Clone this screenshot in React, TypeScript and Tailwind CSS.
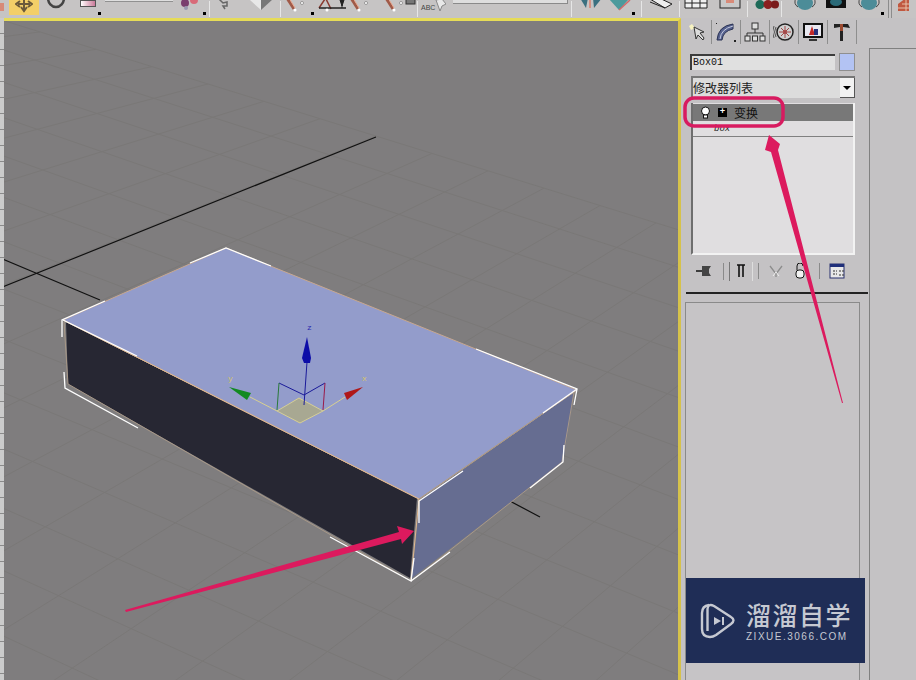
const edgeY = (x: number) => 128 + 0.31 * (x - 350);

// far-to-near lines, steeper as they go right
const gridA = Array.from({ length: 20 }, (_, i) => {
  const x = 40 + i * 56;
  const slope = -0.4 - 0.0008 * (x - 376);
  return { x, y: edgeY(x), x2: x - 900, y2: edgeY(x) - slope * 900 };
});

// lines running with the far edge, spreading out towards the viewer
const gridB = Array.from({ length: 18 }, (_, i) => {
  const slope = 0.31 + 0.012 * i;
  const y = 128 + 32 * i + 1.5 * i * i;
  return { y1: y - slope * 350, y2: y + slope * 350 };
});

function Bar() {
  return <div className="h-[16px] w-[1px] bg-[#8c8c8c] border-r border-[#e6e6e6]" />;
}

function Corner() {
  return <div className="absolute bottom-0 right-0 h-[3px] w-[3px] bg-black" />;
}

function Pencil({ extra }: { extra?: boolean }) {
  return (
    <svg width="20" height="12" viewBox="0 0 20 12" className="shrink-0">
      <path d="M1 -2 L8 9" stroke="#a05a48" strokeWidth="3" />
      <path d="M3 -2 L9 8" stroke="#e8a890" strokeWidth="1" />
      <circle cx="9" cy="10" r="1.5" fill="#fff" />
      <circle cx="16" cy="3" r="1.5" fill="#fff" stroke="#555" strokeWidth="0.5" />
      {extra && <rect x="12" y="0" width="7" height="4" fill="#333" />}
    </svg>
  );
}

function Toolbar() {
  return (
    <div className="relative flex h-[18px] shrink-0 items-start overflow-hidden bg-[#c6c4c4]">
      <div className="mt-[3px] h-[8px] w-[4px] shrink-0 bg-[#d88a78]" />
      <div className="ml-[5px] flex h-[15px] w-[30px] shrink-0 items-center justify-center bg-[#f3cf68]">
        <svg width="18" height="15" viewBox="0 0 18 15">
          <path d="M9 -2 L9 9 M3 4 L15 4 M5 1 L1 4 L5 7 M13 1 L17 4 L13 7 M6 7 L9 11 L12 7" stroke="#6b5a3a" strokeWidth="2" fill="none" />
        </svg>
      </div>
      <svg width="20" height="10" viewBox="0 0 20 10" className="ml-[7px] shrink-0">
        <path d="M2 -2 A8 9 0 0 0 18 -2" stroke="#444" strokeWidth="2.5" fill="none" />
      </svg>
      <div className="relative ml-[9px] h-[15px] w-[26px] shrink-0">
        <div className="ml-[5px] h-[7px] w-[16px] border border-[#555] bg-gradient-to-r from-[#fff] to-[#c87a9a]" />
        <Corner />
      </div>
      <div className="ml-[4px] flex h-[2px] w-[68px] shrink-0 border-b border-[#909090] bg-[#dedede]" />
      <div className="relative ml-[8px] h-[15px] w-[25px] shrink-0">
        <svg width="18" height="10" viewBox="0 0 18 10">
          <circle cx="4" cy="3" r="4" fill="#7a3f6e" />
          <circle cx="13" cy="0" r="4" fill="#d86a78" />
          <circle cx="5" cy="8" r="2" fill="#9a9ab0" />
        </svg>
        <Corner />
      </div>
      <div className="ml-[3px] mt-[1px]"><Bar /></div>
      <svg width="14" height="10" viewBox="0 0 14 10" className="ml-[7px] shrink-0">
        <path d="M2 -1 L6 3 L10 2 L10 6 L6 6 L8 9" stroke="#666" strokeWidth="1.5" fill="none" />
      </svg>
      <svg width="32" height="14" viewBox="0 0 32 14" className="ml-[15px] shrink-0">
        <path d="M4 0 L15 10 L15 0 Z" fill="#e8e8e8" />
        <path d="M15 10 L27 -1 L15 -1 Z" fill="#777" />
      </svg>
      <div className="ml-[2px] mt-[1px]"><Bar /></div>
      <div className="relative ml-[5px] h-[15px] w-[28px] shrink-0">
        <Pencil />
        <Corner />
      </div>
      <svg width="30" height="12" viewBox="0 0 30 12" className="ml-[4px] shrink-0">
        <path d="M1 8 L7 -1 M8 -1 L13 9" stroke="#8a3a30" strokeWidth="1.5" />
        <path d="M1 8 L28 8" stroke="#222" strokeWidth="1.5" />
        <path d="M22 0 L26 0 L24 6 Z M24 -2 L24 8" fill="#222" stroke="#222" />
        <circle cx="9" cy="10" r="1.5" fill="#fff" />
      </svg>
      <div className="ml-[2px]"><Pencil /></div>
      <div className="ml-[15px]"><Pencil /></div>
      <svg width="12" height="10" viewBox="0 0 12 10" className="shrink-0">
        <rect x="1" y="-3" width="9" height="7" fill="#777" stroke="#333" />
      </svg>
      <div className="mt-[1px]"><Bar /></div>
      <div className="relative ml-[3px] h-[15px] w-[30px] shrink-0 pt-[3px] font-['Liberation_Sans',sans-serif] text-[7px] leading-[10px] text-[#444]">
        ABC
        <svg width="12" height="12" viewBox="0 0 12 12" className="absolute right-[5px] top-0">
          <path d="M2 0 L6 11 L8 6 L12 4 L8 -1 Z" fill="#e8e8e8" stroke="#888" />
        </svg>
      </div>
      <div className="ml-[2px] h-[4px] w-[115px] shrink-0 border-r border-b border-[#8a8a8a] bg-[#dedede]" />
      <div className="ml-[3px] mt-[1px]"><Bar /></div>
      <svg width="26" height="10" viewBox="0 0 26 10" className="ml-[6px] shrink-0">
        <path d="M2 -2 L8 8 L10 -2 Z" fill="#3a7080" />
        <path d="M12 -2 L12 8" stroke="#d88070" strokeWidth="1.5" />
        <path d="M15 -2 L16 8 L24 -2 Z" fill="#3a7080" />
      </svg>
      <div className="relative ml-[4px] h-[15px] w-[27px] shrink-0">
        <svg width="24" height="11" viewBox="0 0 24 11">
          <path d="M1 -1 L11 10 L21 -1 Z" fill="#4c9a9c" />
          <path d="M11 10 L22 0" stroke="#d06a6a" strokeWidth="1.5" />
        </svg>
        <Corner />
      </div>
      <div className="ml-[6px] mt-[1px]"><Bar /></div>
      <svg width="24" height="9" viewBox="0 0 24 9" className="ml-[7px] shrink-0">
        <path d="M1 -1 L16 8 L23 4 L8 -3 Z" fill="#eee" stroke="#222" />
        <path d="M1 2 L16 8" stroke="#222" />
      </svg>
      <div className="ml-[6px] mt-[1px]"><Bar /></div>
      <svg width="24" height="10" viewBox="0 0 24 10" className="ml-[4px] shrink-0">
        <path d="M1 -1 H23 V8 H1 Z M1 3 H23 M8 -1 V8 M16 -1 V8" fill="#f0f0f0" stroke="#222" />
      </svg>
      <svg width="24" height="10" viewBox="0 0 24 10" className="ml-[10px] shrink-0">
        <rect x="2" y="-2" width="20" height="10" fill="#c8c8c8" stroke="#222" />
        <rect x="8" y="-1" width="8" height="4" fill="#d88a78" />
      </svg>
      <div className="ml-[5px] mt-[1px]"><Bar /></div>
      <svg width="24" height="10" viewBox="0 0 24 10" className="ml-[7px] shrink-0">
        <circle cx="5" cy="4.5" r="4.5" fill="#1e6a58" />
        <circle cx="13" cy="4.5" r="4.5" fill="#8a2020" />
        <circle cx="20" cy="4.5" r="4" fill="#7a1a1a" />
      </svg>
      <div className="ml-[2px] mt-[1px]"><Bar /></div>
      <svg width="24" height="11" viewBox="0 0 24 11" className="ml-[11px] shrink-0">
        <ellipse cx="12" cy="3" rx="8" ry="7" fill="#4c8c98" />
        <path d="M3 -2 Q0 4 5 7 M21 -2 Q24 4 19 7" stroke="#444" fill="none" />
      </svg>
      <svg width="20" height="9" viewBox="0 0 20 9" className="ml-[9px] shrink-0">
        <rect x="0" y="-1" width="20" height="9" fill="#111" />
        <ellipse cx="10" cy="2" rx="6" ry="4" fill="#2a6a78" />
      </svg>
      <div className="relative ml-[11px] h-[15px] w-[27px] shrink-0">
        <svg width="24" height="11" viewBox="0 0 24 11">
          <ellipse cx="12" cy="3" rx="8" ry="7" fill="#4c8c98" />
          <path d="M3 -2 Q0 4 5 7 M21 -2 Q24 4 19 7" stroke="#444" fill="none" />
        </svg>
        <Corner />
      </div>
      <div className="ml-[4px] h-[18px] w-[4px] shrink-0 border-x border-[#8c8c8c]" />
      <svg width="11" height="11" viewBox="0 0 11 11" className="ml-[6px] shrink-0">
        <path d="M0 11 L0 4 L8 -2 L15 -2 L15 11 Z" fill="#c05840" />
        <path d="M4 4 H15 M0 8 H15 M8 0 V11" stroke="#e8c0a8" />
      </svg>
    </div>
  );
}

function Viewport() {
  return (
    <div className="min-w-0 flex-1 border-t-[3px] border-r-[3px] border-t-[#e6dc58] border-r-[#d6c24a] bg-[#7f7d7e]">
      <svg width="674" height="659" viewBox="4 21 674 659" className="block">
        {gridA.map((l) => (
          <line key={l.x} x1={l.x} y1={l.y} x2={l.x2} y2={l.y2} stroke="#7a7877" strokeWidth="1" />
        ))}
        {gridB.map((l, i) => (
          <line key={i} x1="0" y1={l.y1} x2="700" y2={l.y2} stroke="#7a7877" strokeWidth="1" />
        ))}
        <path d="M0 288 L376 137 M0 258 L100 300 M508 500 L540 517" stroke="#111" strokeWidth="1.2" fill="none" />

        <polygon points="63,320 226,248 577,390 419,499" fill="#939ccb" />
        <polygon points="66,322 417,498 410,578 68,384" fill="#272733" />
        <polygon points="420,500 574,392 563,462 412,578" fill="#666d91" />
        <path d="M63 320 L226 248 L577 390 L419 499 Z" fill="none" stroke="#c8a890" strokeWidth="1" />
        <path d="M63 320 L419 499 L411 580" fill="none" stroke="#e0b890" strokeWidth="1" />
        <path d="M419 499 L574 392 L562 462 L411 581 L68 384 L64 322" fill="none" stroke="#a89888" strokeWidth="1" />

        <g stroke="#fff" strokeWidth="1.3" fill="none">
          <path d="M105 301 L62 320 L62 337" />
          <path d="M190 263 L226 248 L271 266" />
          <path d="M476 349 L577 389 L574 405" />
          <path d="M543 413 L577 389" />
          <path d="M63 320 L137 356" />
          <path d="M463 471 L419 501 L419 523" />
          <path d="M64 372 L65 388 L138 428" />
          <path d="M330 537 L411 581 L414 558" />
          <path d="M564 445 L563 462 L530 488 M450 552 L411 581" />
        </g>

        <polygon points="278,411 299,398 322,411 300,423" fill="#a8a892" />
        <path d="M250 397 L277 411 L299 398 L323 411 L345 397 M277 411 L300 423 L323 411" stroke="#d8d090" strokeWidth="1" fill="none" />
        <path d="M307 362 L304 405 M279 383 L304 395 L325 383" stroke="#1a1a9a" strokeWidth="1" fill="none" />
        <path d="M279 383 L277 410" stroke="#2a7a3a" strokeWidth="1" />
        <path d="M325 383 L323 410" stroke="#9a1a4a" strokeWidth="1" />
        <polygon points="307,337 311,358 310,363 304,363 302,358" fill="#0d0da8" />
        <polygon points="229,387 251,393 247,400" fill="#128a22" />
        <polygon points="363,387 347,400 344,393" fill="#b01818" />
        <text x="307" y="330" fontSize="8" fill="#2a2ab0" fontFamily="'Liberation Mono', monospace">z</text>
        <text x="228" y="381" fontSize="8" fill="#d8c868" fontFamily="'Liberation Mono', monospace">y</text>
        <text x="362" y="381" fontSize="8" fill="#d8c868" fontFamily="'Liberation Mono', monospace">x</text>
      </svg>
    </div>
  );
}

function TabIcon({ children }: { children: React.ReactNode }) {
  return (
    <div className="flex h-[24px] w-[29px] items-center justify-center border-r border-[#8e8e8e]">
      {children}
    </div>
  );
}

function Tabs() {
  return (
    <div className="flex h-[26px] pl-[2px] pt-[1px]">
      <TabIcon>
        <svg width="20" height="20" viewBox="0 0 20 20">
          <path d="M2 4 L5 2 L8 6 L4 8 Z" fill="#f6f2c0" />
          <path d="M7 5 L9 17 L11 13 L16 18 L17 16 L13 11 L17 10 Z" fill="#dcdcdc" stroke="#333" />
        </svg>
      </TabIcon>
      <TabIcon>
        <svg width="22" height="20" viewBox="0 0 22 20">
          <path d="M2 18 Q3 4 18 2 L18 7 Q8 9 7 18 Z" fill="#56618e" stroke="#2b3354" />
          <path d="M5 17 Q6 7 18 4" stroke="#c6cce0" fill="none" />
          <rect x="1" y="1" width="1" height="1" fill="#222" />
          <rect x="19" y="18" width="2" height="2" fill="#222" />
        </svg>
      </TabIcon>
      <TabIcon>
        <svg width="22" height="20" viewBox="0 0 22 20" fill="#dedede" stroke="#333">
          <rect x="8" y="1" width="6" height="6" />
          <path d="M11 7 V11 M3 14 V11 H19 V14" fill="none" />
          <rect x="1" y="14" width="5" height="5" />
          <rect x="8.5" y="14" width="5" height="5" />
          <rect x="16" y="14" width="5" height="5" />
        </svg>
      </TabIcon>
      <TabIcon>
        <svg width="22" height="20" viewBox="0 0 22 20" fill="none">
          <circle cx="12" cy="10" r="8" fill="#cfcfcf" stroke="#222" strokeWidth="1.5" />
          <circle cx="12" cy="10" r="2" fill="#b04040" />
          <path d="M12 4 V16 M6 10 H18 M8 6 L16 14 M16 6 L8 14" stroke="#a04848" />
          <path d="M3 5 Q0 10 3 15 M1 4 Q-2 10 1 16" stroke="#555" />
        </svg>
      </TabIcon>
      <TabIcon>
        <svg width="22" height="20" viewBox="0 0 22 20">
          <rect x="1" y="1" width="20" height="15" fill="#111" />
          <rect x="3" y="3" width="16" height="11" fill="#e8e8f0" />
          <path d="M7 13 L10 4 L13 13 Z" fill="#c02828" />
          <rect x="12" y="7" width="4" height="6" fill="#28307a" />
          <rect x="7" y="17" width="8" height="2" fill="#333" />
        </svg>
      </TabIcon>
      <TabIcon>
        <svg width="22" height="20" viewBox="0 0 22 20">
          <path d="M3 2 H17 L19 6 L12 5 L12 19 L9 19 L9 5 L3 6 Z" fill="#222" />
          <rect x="9" y="2" width="3" height="7" fill="#9c4a30" />
        </svg>
      </TabIcon>
    </div>
  );
}

function StackButtons() {
  return (
    <div className="mt-[6px] flex h-[20px] items-center pl-[14px]">
      <svg width="18" height="14" viewBox="0 0 18 14">
        <path d="M1 7 H7" stroke="#111" strokeWidth="1.5" />
        <path d="M7 2 L16 2 L14 5 L14 9 L16 12 L7 12 Z" fill="#444" />
      </svg>
      <div className="ml-[10px] h-[17px] w-[1px] bg-[#8a8a8a]" />
      <div className="ml-[5px] h-[19px] w-[1px] bg-[#777]" />
      <svg width="12" height="14" viewBox="0 0 12 14" className="ml-[5px]">
        <path d="M2 1 H10 M4 1 V13 M8 1 V13" stroke="#111" strokeWidth="1.6" fill="none" />
      </svg>
      <div className="ml-[5px] h-[19px] w-[1px] bg-[#dedede]" />
      <div className="ml-[5px] h-[16px] w-[1px] bg-[#8a8a8a]" />
      <svg width="14" height="14" viewBox="0 0 14 14" className="ml-[10px]">
        <path d="M1 2 L7 10 L13 2 M7 10 L7 13" stroke="#8c8c8c" strokeWidth="1.3" fill="none" />
        <path d="M4 12 L7 8 L10 12" stroke="#eee" fill="none" />
      </svg>
      <svg width="12" height="16" viewBox="0 0 12 16" className="ml-[11px]">
        <path d="M3 7 V3 A3 3 0 0 1 9 3" stroke="#111" fill="none" />
        <rect x="2" y="7" width="8" height="8" rx="3" fill="#f2f2f2" stroke="#111" />
      </svg>
      <div className="ml-[13px] h-[16px] w-[1px] bg-[#8a8a8a]" />
      <svg width="18" height="16" viewBox="0 0 18 16" className="ml-[9px]">
        <rect x="1" y="1" width="14" height="14" fill="#e8e8e8" stroke="#28306e" />
        <rect x="1" y="1" width="14" height="3" fill="#1f2f7a" />
        <path d="M4 8 H8 M4 11 H8 M10 8 H16 M10 12 H16" stroke="#333" strokeDasharray="2 1" />
      </svg>
    </div>
  );
}

function CommandPanel() {
  return (
    <div className="flex w-[235px] shrink-0 bg-[#c4c2c4]">
      <div className="w-[188px] shrink-0 pt-[1px]">
        <Tabs />
        <div className="ml-[9px] mt-[7px] flex h-[19px] w-[165px] items-center gap-[4px]">
          <div className="h-[16px] w-[145px] border-t-2 border-l-2 border-[#3c3c3c] bg-[#e0e0e0] pl-[1px] font-['Liberation_Mono',monospace] text-[10px] leading-[14px] text-[#111]">
            Box01
          </div>
          <div className="h-[18px] w-[16px] border border-[#8f8f8f] bg-[#b3c3f3]" />
        </div>
        <div className="ml-[10px] mt-[5px] flex h-[22px] w-[164px] items-center justify-between border-t-2 border-l-2 border-[#777] bg-[#dcdcdc]">
          <span className="font-['Noto_Sans_CJK_SC',sans-serif] text-[12px] leading-none text-[#222]">修改器列表</span>
          <div className="flex h-[20px] w-[15px] items-center justify-center border-r border-b border-[#555] bg-[#f2f2f2]">
            <div className="h-0 w-0 border-x-[4px] border-t-[4px] border-x-transparent border-t-black" />
          </div>
        </div>
        <div className="ml-[10px] mt-[5px] h-[152px] w-[164px] border-l-2 border-b-2 border-r-2 border-l-[#6e6e6e] border-b-[#f2f2f2] border-r-[#f2f2f2] bg-[#e0dee0] pt-[1px]">
          <div className="flex h-[17px] items-center bg-[#787878] pl-[7px]">
            <svg width="11" height="13" viewBox="0 0 11 13">
              <circle cx="5.5" cy="5" r="4" fill="#fff" stroke="#111" />
              <rect x="3.5" y="9" width="4" height="3" fill="#fff" stroke="#111" />
            </svg>
            <div className="ml-[7px] flex h-[9px] w-[9px] items-center justify-center bg-black font-['Liberation_Mono',monospace] text-[9px] font-bold leading-none text-white">+</div>
            <span className="ml-[7px] font-['Noto_Sans_CJK_SC',sans-serif] text-[12px] leading-none text-[#111]">变换</span>
          </div>
          <div className="flex h-[16px] items-center border-b border-[#808080] pl-[21px] pt-[2px] font-['Liberation_Mono',monospace] text-[9px] italic leading-none text-[#222]">
            box
          </div>
        </div>
        <StackButtons />
        <div className="relative ml-[5px] mt-[11px] h-[2px] w-[182px] bg-[#222]" />
        <div className="ml-[4px] mt-[8px] h-[378px] w-[175px] border-t border-x border-[#8a8a8a] bg-[#c6c4c6]" />
      </div>
      <div className="mt-[30px] w-[47px] border-l border-t border-[#808080]" />
    </div>
  );
}

function Annotations() {
  return (
    <svg width="916" height="680" viewBox="0 0 916 680" className="pointer-events-none absolute left-0 top-0">
      <polygon points="125,610 399,532 397,526 414,531 402,544 401,539 126,612" fill="#dc1a5e" />
      <polygon points="842,403 771,152 765,150 769,135 780,144 778,150 843,403" fill="#dc1a5e" />
      <rect x="685" y="98" width="98" height="28" rx="9" fill="none" stroke="#d81b60" strokeWidth="3.5" />
    </svg>
  );
}

function Watermark() {
  return (
    <div className="absolute left-[686px] top-[578px] flex h-[85px] w-[179px] items-center bg-[#1f2d56] pl-[14px] text-[#c6c9d2]">
      <svg width="36" height="36" viewBox="0 0 36 36" fill="none" stroke="#c6c9d2" strokeWidth="2.4">
        <path d="M9 2 Q2 3 2 10 V26 Q2 34 10 34 Q13 34 16 32 L31 21 Q36 17 31 14 L14 3 Q8 0 7.5 6 V28" strokeLinejoin="round" />
        <path d="M14 14 L21 18 L14 22 Z" fill="#c6c9d2" stroke="none" />
        <path d="M23 14 V22" strokeWidth="2" />
      </svg>
      <div className="ml-[10px] mt-[2px]">
        <div className="whitespace-nowrap font-['Noto_Sans_CJK_SC',sans-serif] text-[25px] font-medium leading-[24px] tracking-[1.5px]">溜溜自学</div>
        <div className="mt-[6px] whitespace-nowrap font-['Liberation_Sans',sans-serif] text-[10px] leading-[10px] tracking-[1.5px]">ZIXUE.3066.COM</div>
      </div>
    </div>
  );
}

export default function App() {
  return (
    <div className="relative flex h-[680px] w-[916px] flex-col overflow-hidden bg-[#c4c2c4]">
      <Toolbar />
      <div className="flex min-h-0 flex-1">
        <div className="w-[4px] shrink-0 bg-[repeating-linear-gradient(180deg,#cbcbcb_0px,#cbcbcb_15px,#8a8a8a_15px,#8a8a8a_16px)]" />
        <Viewport />
        <CommandPanel />
      </div>
      <Annotations />
      <Watermark />
    </div>
  );
}
